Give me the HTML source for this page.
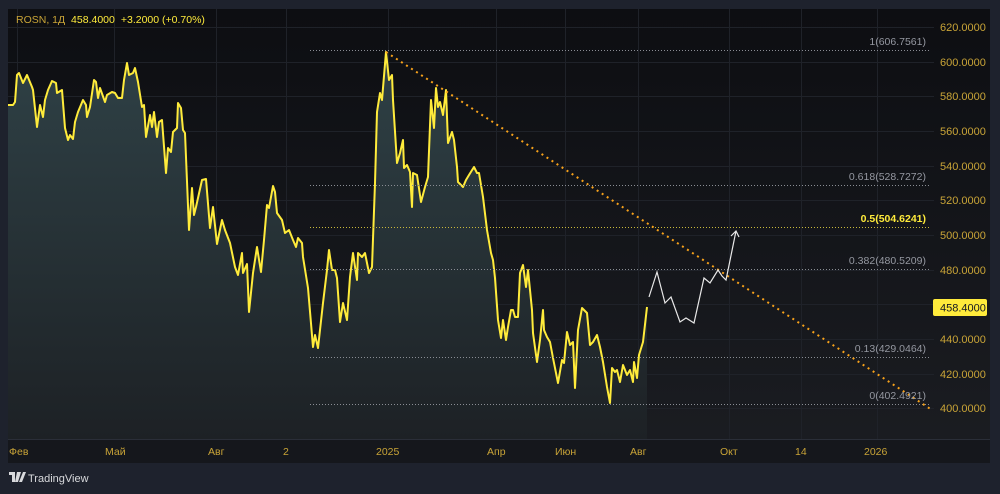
<!DOCTYPE html>
<html><head><meta charset="utf-8"><style>
html,body{margin:0;padding:0;background:#1e222d;width:1000px;height:494px;overflow:hidden}
svg{display:block}
text{font-family:"Liberation Sans",sans-serif}
</style></head><body>
<svg width="1000" height="494" viewBox="0 0 1000 494">
<defs>
<linearGradient id="bg" x1="0" y1="0" x2="0" y2="1"><stop offset="0" stop-color="#0d0e12"/><stop offset="1" stop-color="#1b1d22"/></linearGradient>
<linearGradient id="fill" x1="0" y1="0" x2="0" y2="1"><stop offset="0" stop-color="#2f4146"/><stop offset="1" stop-color="#1d2125"/></linearGradient>
</defs>
<rect x="0" y="0" width="1000" height="494" fill="#1e222d"/>
<rect x="8" y="9" width="982" height="454" fill="url(#bg)"/>
<rect x="8" y="439" width="982" height="24" fill="#15171c"/>
<g stroke="#1f2229" stroke-width="1">
<line x1="8" y1="27.5" x2="934" y2="27.5"/><line x1="8" y1="62.5" x2="934" y2="62.5"/><line x1="8" y1="96.5" x2="934" y2="96.5"/><line x1="8" y1="131.5" x2="934" y2="131.5"/><line x1="8" y1="166.5" x2="934" y2="166.5"/><line x1="8" y1="200.5" x2="934" y2="200.5"/><line x1="8" y1="235.5" x2="934" y2="235.5"/><line x1="8" y1="270.5" x2="934" y2="270.5"/><line x1="8" y1="304.5" x2="934" y2="304.5"/><line x1="8" y1="339.5" x2="934" y2="339.5"/><line x1="8" y1="374.5" x2="934" y2="374.5"/><line x1="8" y1="408.5" x2="934" y2="408.5"/>
<line x1="17.5" y1="9" x2="17.5" y2="439"/><line x1="114.5" y1="9" x2="114.5" y2="439"/><line x1="216.5" y1="9" x2="216.5" y2="439"/><line x1="286.5" y1="9" x2="286.5" y2="439"/><line x1="388.5" y1="9" x2="388.5" y2="439"/><line x1="496.5" y1="9" x2="496.5" y2="439"/><line x1="565.5" y1="9" x2="565.5" y2="439"/><line x1="638.5" y1="9" x2="638.5" y2="439"/><line x1="729.5" y1="9" x2="729.5" y2="439"/><line x1="801.5" y1="9" x2="801.5" y2="439"/><line x1="877.5" y1="9" x2="877.5" y2="439"/>
</g>
<line x1="8" y1="439.5" x2="990" y2="439.5" stroke="#2a2e38"/>
<polygon fill="url(#fill)" points="8,439 8,105 13,105 15,102 17,75 19,73 23,83 27,75 32,87 33,90 37,127 40,105 43,117 45,100 48,90 52,81 56,83 57,93 62,90 65,128 68,140 70,135 73,139 75,122 78,112 83,100 86,105 87,117 90,107 94,80 96,82 98,98 100,88 105,102 107,95 112,92 115,93 118,98 122,98 124,80 127,63 129,75 133,73 135,68 138,82 142,107 144,105 146,137 150,115 152,127 154,112 157,137 159,122 162,120 166,173 168,148 171,152 173,132 177,128 178,103 181,108 183,130 185,133 189,230 192,188 194,215 196,207 202,180 206,179 210,228 213,207 217,244 222,220 225,230 230,243 235,267 238,275 242,253 243,273 247,264 249,312 253,273 257,247 261,272 264,240 267,205 269,208 273,186 275,192 277,213 282,220 285,233 289,230 293,240 296,247 298,238 302,243 303,257 308,288 313,347 315,335 318,348 323,303 327,270 329,250 332,270 335,270 337,278 340,322 343,303 347,320 350,277 353,253 357,280 358,253 362,257 365,253 369,273 372,267 375,183 377,112 380,93 382,100 386,52 389,80 392,75 393,100 397,163 400,153 403,140 404,168 407,165 410,172 412,207 413,173 417,175 421,202 425,187 428,177 431,100 434,128 436,88 438,107 440,102 443,115 446,90 448,143 452,132 454,140 457,167 458,182 463,187 466,180 469,175 474,167 477,173 479,173 483,197 487,230 491,253 493,260 495,278 498,320 501,338 503,320 506,340 508,327 511,310 513,310 515,317 518,317 520,273 523,265 526,287 528,270 532,310 533,333 537,362 540,340 543,310 544,330 547,337 550,342 553,358 558,383 562,360 564,363 567,332 570,345 573,342 575,388 578,330 582,308 587,313 590,345 593,342 597,335 600,347 603,362 607,387 610,403 612,368 615,372 617,370 620,382 623,365 627,375 630,370 633,382 634,362 637,378 639,355 643,342 647,307 647,439"/>
<polyline fill="none" stroke="#ffeb3b" stroke-width="2" stroke-linejoin="round" points="8,105 13,105 15,102 17,75 19,73 23,83 27,75 32,87 33,90 37,127 40,105 43,117 45,100 48,90 52,81 56,83 57,93 62,90 65,128 68,140 70,135 73,139 75,122 78,112 83,100 86,105 87,117 90,107 94,80 96,82 98,98 100,88 105,102 107,95 112,92 115,93 118,98 122,98 124,80 127,63 129,75 133,73 135,68 138,82 142,107 144,105 146,137 150,115 152,127 154,112 157,137 159,122 162,120 166,173 168,148 171,152 173,132 177,128 178,103 181,108 183,130 185,133 189,230 192,188 194,215 196,207 202,180 206,179 210,228 213,207 217,244 222,220 225,230 230,243 235,267 238,275 242,253 243,273 247,264 249,312 253,273 257,247 261,272 264,240 267,205 269,208 273,186 275,192 277,213 282,220 285,233 289,230 293,240 296,247 298,238 302,243 303,257 308,288 313,347 315,335 318,348 323,303 327,270 329,250 332,270 335,270 337,278 340,322 343,303 347,320 350,277 353,253 357,280 358,253 362,257 365,253 369,273 372,267 375,183 377,112 380,93 382,100 386,52 389,80 392,75 393,100 397,163 400,153 403,140 404,168 407,165 410,172 412,207 413,173 417,175 421,202 425,187 428,177 431,100 434,128 436,88 438,107 440,102 443,115 446,90 448,143 452,132 454,140 457,167 458,182 463,187 466,180 469,175 474,167 477,173 479,173 483,197 487,230 491,253 493,260 495,278 498,320 501,338 503,320 506,340 508,327 511,310 513,310 515,317 518,317 520,273 523,265 526,287 528,270 532,310 533,333 537,362 540,340 543,310 544,330 547,337 550,342 553,358 558,383 562,360 564,363 567,332 570,345 573,342 575,388 578,330 582,308 587,313 590,345 593,342 597,335 600,347 603,362 607,387 610,403 612,368 615,372 617,370 620,382 623,365 627,375 630,370 633,382 634,362 637,378 639,355 643,342 647,307"/>
<g stroke-dasharray="1 2" stroke-width="1">
<line x1="310" y1="50.5" x2="930" y2="50.5" stroke="#8a8d94"/>
<line x1="310" y1="185.5" x2="930" y2="185.5" stroke="#8a8d94"/>
<line x1="310" y1="227.5" x2="930" y2="227.5" stroke="#c8b93a"/>
<line x1="310" y1="269.5" x2="930" y2="269.5" stroke="#8a8d94"/>
<line x1="310" y1="357.5" x2="930" y2="357.5" stroke="#8a8d94"/>
<line x1="310" y1="404.5" x2="930" y2="404.5" stroke="#8a8d94"/>
</g>
<line x1="386" y1="52" x2="932" y2="410" stroke="#f7a21b" stroke-width="2" stroke-dasharray="2 4"/>
<polyline fill="none" stroke="#e8e8e8" stroke-width="1.2" points="649,297 657,272 665,303 671,297 680,322 686,318 694,323 704,278 710,283 718,270 722,276 726,280 736,231"/>
<polyline fill="none" stroke="#e8e8e8" stroke-width="1.2" points="731,236 736,231 739,237"/>
<g font-size="10.5" fill="#9598a1" text-anchor="end">
<text x="926" y="45">1(606.7561)</text>
<text x="926" y="180">0.618(528.7272)</text>
<text x="926" y="222" fill="#ffeb3b" font-weight="bold">0.5(504.6241)</text>
<text x="926" y="264">0.382(480.5209)</text>
<text x="926" y="352">0.13(429.0464)</text>
<text x="926" y="399">0(402.4921)</text>
</g>
<g font-size="11" fill="#c9a437">
<text x="940" y="31">620.0000</text><text x="940" y="66">600.0000</text><text x="940" y="100">580.0000</text><text x="940" y="135">560.0000</text><text x="940" y="170">540.0000</text><text x="940" y="204">520.0000</text><text x="940" y="239">500.0000</text><text x="940" y="274">480.0000</text><text x="940" y="343">440.0000</text><text x="940" y="378">420.0000</text><text x="940" y="412">400.0000</text>
</g>
<rect x="933" y="299" width="54" height="17" rx="2" fill="#ffeb3b"/>
<text x="940" y="311.5" font-size="11" fill="#131722">458.4000</text>
<g font-size="10.5" fill="#c9a437">
<text x="9" y="455">Фев</text><text x="105" y="455">Май</text><text x="208" y="455">Авг</text><text x="283" y="455">2</text><text x="376" y="455">2025</text><text x="487" y="455">Апр</text><text x="555" y="455">Июн</text><text x="630" y="455">Авг</text><text x="720" y="455">Окт</text><text x="795" y="455">14</text><text x="864" y="455">2026</text>
</g>
<text x="16" y="23" font-size="10.5" fill="#c9a437">ROSN, 1Д <tspan fill="#ffeb3b" dx="3">458.4000</tspan><tspan fill="#ffeb3b" dx="6">+3.2000 (+0.70%)</tspan></text>
<g fill="#d8d9dc">
<rect x="9" y="472" width="6" height="3"/><rect x="12" y="472" width="3" height="10"/><polygon points="17,472 21,472 18,482 15,482"/><circle cx="17.5" cy="474" r="0"/>
<polygon points="19,482 23,472 26,472 22,482"/>
</g>
<text x="28" y="482" font-size="11" fill="#d8d9dc">TradingView</text>
</svg>
</body></html>
